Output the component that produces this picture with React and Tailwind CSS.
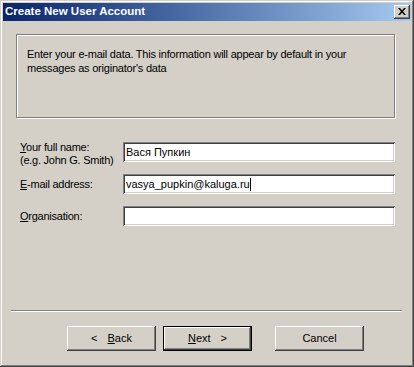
import React from "react";

const raised =
  "shadow-[inset_-1px_-1px_0_#404040,inset_1px_1px_0_#ffffff,inset_-2px_-2px_0_#808080]";
const sunken =
  "shadow-[inset_1px_1px_0_#808080,inset_-1px_-1px_0_#ffffff,inset_2px_2px_0_#404040,inset_-2px_-2px_0_#d4d0c8]";

function Btn({ children, def }) {
  return (
    <div
      className={
        "w-[89px] h-[25px] flex items-center justify-center bg-[#d4d0c8] text-black text-[11px] " +
        (def ? "border border-black" : "")
      }
    >
      <div className={"w-full h-full flex items-center justify-center " + raised}>{children}</div>
    </div>
  );
}

function Input({ value, cursor }) {
  return (
    <div className={"w-[272px] h-[20px] shrink-0 bg-white flex items-center pl-[3px] text-[11px] text-black " + sunken}>
      <span>{value}</span>
      {cursor && <span className="inline-block w-px h-[13px] bg-black" />}
    </div>
  );
}

export default function App() {
  return (
    <div
      className="w-[414px] h-[367px] bg-[#d4d0c8] p-[3px] flex flex-col shadow-[inset_-1px_-1px_0_#404040,inset_1px_1px_0_#d4d0c8,inset_-2px_-2px_0_#808080,inset_2px_2px_0_#ffffff]"
      style={{ fontFamily: '"Liberation Sans", Arial, sans-serif' }}
    >
      <div className="h-[18px] shrink-0 bg-linear-to-r from-[#0a246a] to-[#a6caf0] flex items-center justify-between pl-[2px] pr-[1px]">
        <span className="text-white font-bold text-[11.5px] leading-none">
          Create New User Account
        </span>
        <div className={"w-[16px] h-[14px] bg-[#d4d0c8] flex items-center justify-center " + raised}>
          <svg width="8" height="7" viewBox="0 0 8 7" className="-mt-px">
            <path d="M0 0h2l2 2.5L6 0h2L5 3.5 8 7H6L4 4.5 2 7H0l3-3.5z" fill="#000" />
          </svg>
        </div>
      </div>

      <div className="ml-[13px] mt-[13px] w-[379px] h-[84px] shrink-0 border border-[#808080] shadow-[inset_1px_1px_0_#ffffff,1px_1px_0_#ffffff] pl-[10px] pt-[12px] text-[11px] leading-[14px] tracking-[-0.22px] text-black">
        Enter your e-mail data. This information will appear by default in your
        <br />
        messages as originator's data
      </div>

      <div className="mt-[24px] flex flex-col gap-[12px] pl-[17px] text-[11px] text-black">
        <div className="flex items-start h-[20px]">
          <div className="w-[103px] leading-[13px] -mt-[1px] tracking-[-0.25px] whitespace-nowrap">
            <span className="underline">Y</span>our full name:
            <br />
            (e.g. John G. Smith)
          </div>
          <Input value="Вася Пупкин" />
        </div>
        <div className="flex items-center h-[20px]">
          <div className="w-[103px] tracking-[-0.25px]">
            <span className="underline">E</span>-mail address:
          </div>
          <Input value="vasya_pupkin@kaluga.ru" cursor />
        </div>
        <div className="flex items-center h-[20px]">
          <div className="w-[103px] tracking-[-0.25px]">
            <span className="underline">O</span>rganisation:
          </div>
          <Input value="" />
        </div>
      </div>

      <div className="mt-[84px] ml-[8px] w-[391px] h-[2px] shrink-0 border-t border-t-[#808080] border-b border-b-[#ffffff]" />

      <div className="mt-[14px] pl-[64px] flex">
        <Btn>
          <span className="mr-[10px]">&lt;</span>
          <span>
            <span className="underline">B</span>ack
          </span>
        </Btn>
        <div className="w-[7px]" />
        <Btn def>
          <span>
            <span className="underline">N</span>ext
          </span>
          <span className="ml-[10px]">&gt;</span>
        </Btn>
        <div className="w-[23px]" />
        <Btn>Cancel</Btn>
      </div>
    </div>
  );
}
